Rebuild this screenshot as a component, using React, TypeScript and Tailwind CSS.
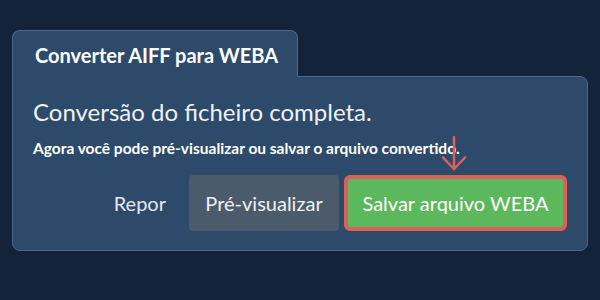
import React from 'react';

const DownArrow: React.FC = () => (
    <svg width="26" height="36" viewBox="0 0 26 36" fill="none" className="text-[#e0605a]">
        <path d="M13 1V33" stroke="currentColor" strokeWidth="2.5" strokeLinecap="round" />
        <path d="M2 21.5L13 33L24 21.5" stroke="currentColor" strokeWidth="2.5" strokeLinecap="round" strokeLinejoin="round" />
    </svg>
);

const App: React.FC = () => {
    return (
        <div
            className="w-[600px] h-[300px] bg-[#12233a] px-3 pt-[30px]"
            style={{ fontFamily: 'Lato, "Noto Sans", sans-serif' }}
        >
            {/* Tab */}
            <div className="relative z-10 -mb-px w-[286px] h-[47px] pt-[14px] pl-[22px] bg-[#2d4a6b] border border-b-0 border-[#4d6888] rounded-t-lg">
                <span className="block text-white text-[20px] font-bold leading-none">Converter AIFF para WEBA</span>
            </div>

            {/* Panel */}
            <div className="w-[576px] h-[175px] bg-[#2d4a6b] border border-[#4d6888] rounded-b-lg rounded-tr-lg px-5 pt-[23px] pb-[19px] flex flex-col">
                <h2 className="text-[#eef1f5] text-[24px] leading-none">Conversão do ficheiro completa.</h2>
                <p className="text-white text-[15.5px] font-bold leading-none mt-[17px]">
                    Agora você pode pré-visualizar ou salvar o arquivo convertido.
                </p>

                <div className="mt-auto flex items-center justify-end">
                    <button className="text-[#e3e8ee] text-[20px] leading-none mr-[23px]">Repor</button>
                    <button className="w-[150px] h-[56px] rounded bg-[#4b5b6c] text-[#eef1f5] text-[20px] leading-none mr-[5px]">
                        Pré-visualizar
                    </button>
                    <div className="relative">
                        <div className="absolute left-1/2 -translate-x-[15px] bottom-full mb-[3px]">
                            <DownArrow />
                        </div>
                        <button className="w-[223px] h-[56px] rounded-md border-4 border-[#dc5f58] bg-[#5cb85c] text-white text-[20px] leading-none">
                            Salvar arquivo WEBA
                        </button>
                    </div>
                </div>
            </div>
        </div>
    );
};

export default App;
